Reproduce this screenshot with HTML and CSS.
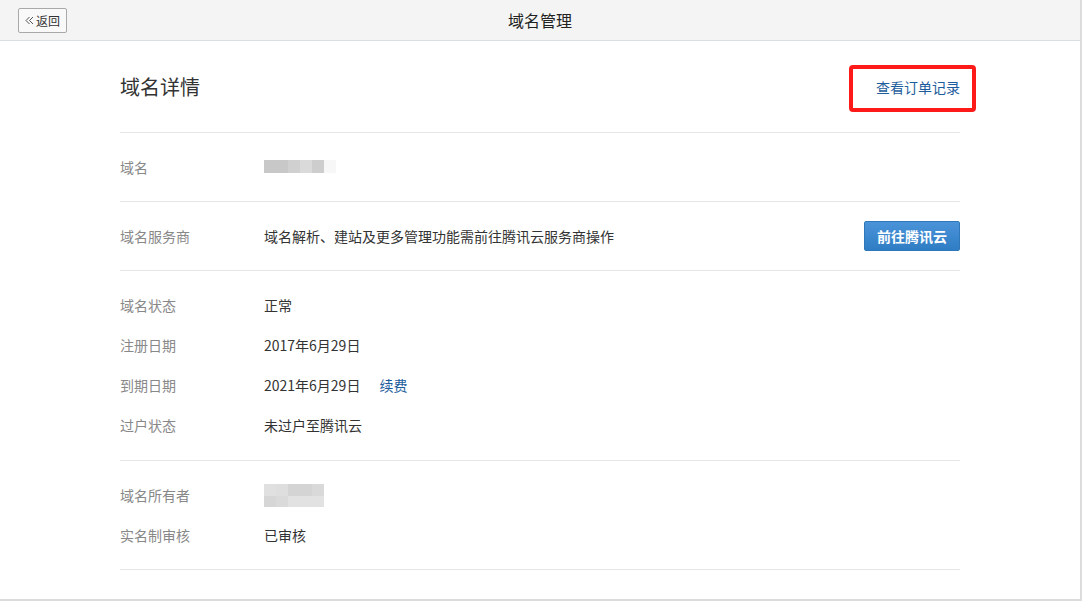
FILE: index.html
```html
<html>
<head>
	<meta charset="utf-8">
	<title>域名管理</title>
	<link rel="stylesheet" href="styles.css">
</head>
<body>
<div class="page">
	<div class="topbar">
		<a class="back">
			<svg width="9" height="9" viewBox="0 0 9 9"><path d="M4.5 1 L1 4.5 L4.5 8 M8 1 L4.5 4.5 L8 8" fill="none" stroke="#555" stroke-width="1"/></svg>
			返回
		</a>
		<div class="topbar-title">域名管理</div>
	</div>

	<div class="content">
		<div class="head">
			<h1>域名详情</h1>
			<span class="link-wrap">
				<a class="link">查看订单记录</a>
				<span class="mark"></span>
			</span>
		</div>

		<div class="section">
			<div class="row">
				<span class="label">域名</span>
				<span class="mosaic m1">
					<i class="c1"></i><i class="c2"></i><i class="c3"></i><i class="c4"></i><i class="c5"></i>
				</span>
			</div>
		</div>

		<div class="section">
			<div class="row">
				<span class="label">域名服务商</span>
				<span class="value">域名解析、建站及更多管理功能需前往腾讯云服务商操作</span>
				<a class="btn">前往腾讯云</a>
			</div>
		</div>

		<div class="section tall">
			<div class="row">
				<span class="label">域名状态</span>
				<span class="value">正常</span>
			</div>
			<div class="row">
				<span class="label">注册日期</span>
				<span class="value">2017年6月29日</span>
			</div>
			<div class="row">
				<span class="label">到期日期</span>
				<span class="value">2021年6月29日</span>
				<a class="link renew">续费</a>
			</div>
			<div class="row">
				<span class="label">过户状态</span>
				<span class="value">未过户至腾讯云</span>
			</div>
		</div>

		<div class="section">
			<div class="row">
				<span class="label">域名所有者</span>
				<span class="mosaic m2">
					<i class="d1"></i><i class="d2"></i><i class="d3"></i><i class="d4"></i>
					<i class="d5"></i><i class="d6"></i><i class="d7"></i><i class="d8"></i>
				</span>
			</div>
			<div class="row">
				<span class="label">实名制审核</span>
				<span class="value">已审核</span>
			</div>
		</div>
	</div>
</div>
</body>
</html>
```

FILE: styles.css
```css
body, html {
	margin: 0;
	height: 100%;
	font-family: "Noto Sans CJK SC", "Liberation Sans", sans-serif;
	color: #333;
	background: #fff;
}

.page {
	height: 601px;
	box-sizing: border-box;
	border-right: 2px solid #dcdcdc;
	border-bottom: 2px solid #dcdcdc;
}

.topbar {
	height: 40px;
	background: #f4f4f4;
	border-bottom: 1px solid #dadde2;
	display: flex;
	align-items: center;
	position: relative;
}
.topbar-title {
	flex: 1;
	text-align: center;
	font-size: 16px;
	color: #222;
	margin-right: 67px;
}
.back {
	margin-left: 18px;
	width: 49px;
	height: 25px;
	box-sizing: border-box;
	border: 1px solid #a9a9a9;
	border-radius: 2px;
	background: #f9f9f9;
	font-size: 12px;
	color: #333;
	display: flex;
	align-items: center;
	justify-content: center;
	gap: 2px;
	cursor: pointer;
}

.content {
	width: 840px;
	margin: 0 auto;
}

.head {
	height: 91px;
	border-bottom: 1px solid #e5e5e5;
	display: flex;
	align-items: center;
	justify-content: space-between;
}
.head h1 {
	margin: 0;
	font-size: 20px;
	font-weight: normal;
	color: #333;
}

.link {
	color: #1d5d9c;
	font-size: 14px;
	cursor: pointer;
}
.link-wrap {
	position: relative;
	display: inline-block;
}
.mark {
	position: absolute;
	left: -27px;
	right: -16px;
	top: -12px;
	bottom: -15px;
	border: 4px solid #ff1a1a;
	border-radius: 4px;
}

.section {
	padding: 14px 0;
	border-bottom: 1px solid #e5e5e5;
}
.section.tall {
	padding-bottom: 15px;
}
.row {
	height: 40px;
	display: flex;
	align-items: center;
	font-size: 14px;
}
.label {
	width: 144px;
	color: #888;
}
.value {
	color: #333;
}
.renew {
	margin-left: 19px;
}

.btn {
	margin-left: auto;
	width: 96px;
	height: 30px;
	box-sizing: border-box;
	border: 1px solid #2f77bb;
	border-radius: 2px;
	background: linear-gradient(#4a93d9, #2f7dc4);
	color: #fff;
	font-size: 14px;
	font-weight: bold;
	display: flex;
	align-items: center;
	justify-content: center;
	cursor: pointer;
}

/* blurred-out values */
.mosaic {
	display: grid;
}
.mosaic i {
	display: block;
}
.m1 {
	grid-template-columns: 24px 12px 12px 12px 12px;
	grid-template-rows: 13px 6px;
	margin-top: 5px;
}
.m1 .c1 { background: #c8c8c8; }
.m1 .c2 { background: #d0d0d0; }
.m1 .c3 { background: #dadada; }
.m1 .c4 { background: #cdcdcd; }
.m1 .c5 { background: #f7f7f7; }
.m2 {
	grid-template-columns: 12px 12px 24px 12px;
	grid-template-rows: 12px 11px;
}
.m2 .d1 { background: #e0e0e0; }
.m2 .d2 { background: #dedede; }
.m2 .d3 { background: #d4d4d4; }
.m2 .d4 { background: #d9d9d9; }
.m2 .d5 { background: #d6d6d6; }
.m2 .d6 { background: #dadada; }
.m2 .d7 { background: #e2e2e2; }
.m2 .d8 { background: #e2e2e2; }
```
